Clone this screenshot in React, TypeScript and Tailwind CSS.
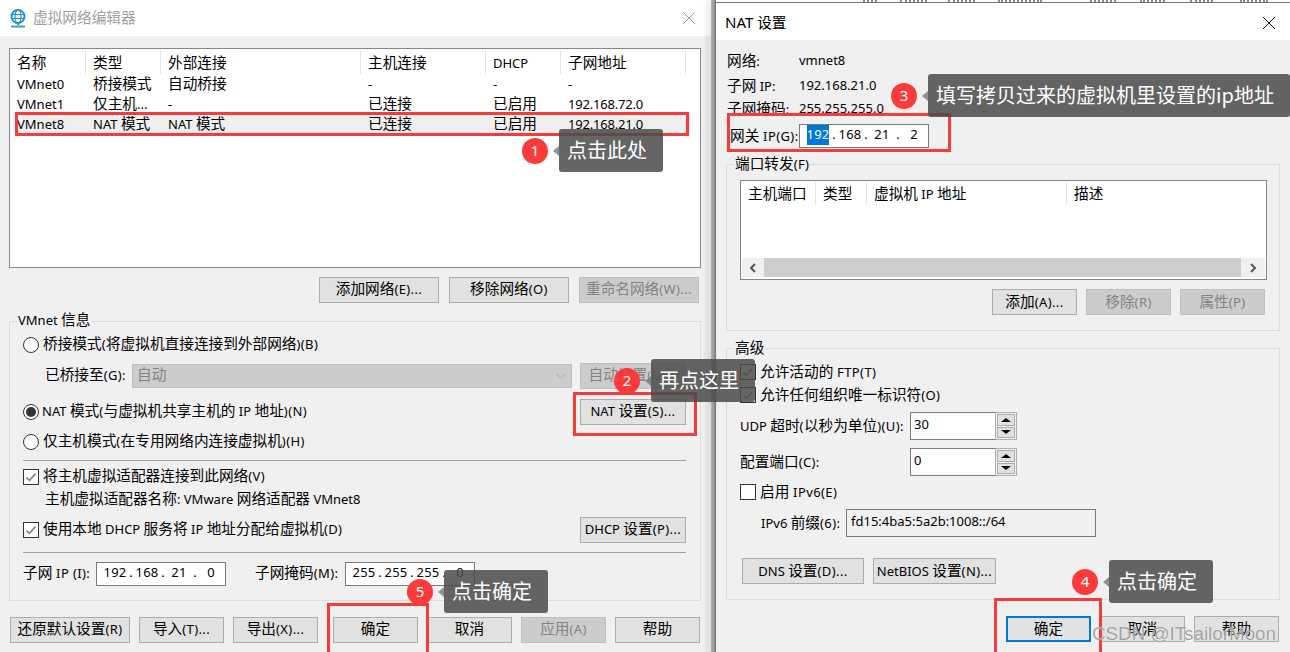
// App.tsx - VMware virtual network editor dialogs with step callouts
import React from "react";
import clsx from "clsx";

// CJK glyphs run larger than the Latin UI font in these dialogs
const Mixed = ({ text }: { text: string }) => (
  <span className="inline-block pb-[var(--lift,2px)] leading-[18px] whitespace-pre">
    {text.split(/([\u4e00-\u9fff]+)/).map((part, i) =>
      /[\u4e00-\u9fff]/.test(part) ? (
        <span key={i} className="text-[14.67px] [font-family:'Noto_Sans_CJK_SC',sans-serif]">
          {part}
        </span>
      ) : (
        <span key={i} className={clsx(/[()]/.test(part) && "tracking-[0.4px]")}>
          {part}
        </span>
      )
    )}
  </span>
);

interface BtnProps {
  label: string;
  w: string;
  disabled?: boolean;
  focused?: boolean;
}

const Btn = ({ label, w, disabled, focused }: BtnProps) => (
  <button
    className={clsx(
      "h-[26px] shrink-0 flex items-center justify-center whitespace-nowrap",
      w,
      disabled
        ? "bg-[#cccccc] border border-[#bfbfbf] text-[#838383]"
        : "bg-[#e1e1e1] text-black",
      !disabled && (focused ? "border-2 border-[#0078d7]" : "border border-[#adadad]")
    )}
  >
    <Mixed text={label} />
  </button>
);

const Radio = ({ checked }: { checked?: boolean }) => (
  <span className="w-[16px] h-[16px] shrink-0 rounded-full border border-[#333333] bg-white flex items-center justify-center">
    {checked && <span className="w-[10px] h-[10px] rounded-full bg-[#333333]" />}
  </span>
);

const Check = ({ checked }: { checked?: boolean }) => (
  <span className="w-[16px] h-[16px] shrink-0 border border-[#333333] bg-white flex items-center justify-center">
    {checked && (
      <svg width="12" height="12" viewBox="0 0 12 12" fill="none">
        <path d="M1.5 6.5 L4.5 9.5 L10.5 2.5" stroke="#777777" strokeWidth="1.5" />
      </svg>
    )}
  </span>
);

const Row = ({ children, className }: { children: React.ReactNode; className?: string }) => (
  <div className={clsx("flex items-center whitespace-nowrap", className)}>{children}</div>
);

const Separator = ({ className }: { className?: string }) => (
  <div className={clsx("h-px w-[663px] bg-[#a0a0a0]", className)} />
);

const IpField = ({ parts, selectFirst }: { parts: string[]; selectFirst?: boolean }) => (
  <div className="w-[130px] h-[24px] shrink-0 bg-white border border-[#7a7a7a] flex items-center pl-[6px] pb-[2px] tracking-[0.2px]">
    {parts.map((p, i) => (
      <React.Fragment key={i}>
        <span className="w-[24px] flex justify-center">
          <span className={clsx(selectFirst && i === 0 && "bg-[#0078d7] text-white")}>{p}</span>
        </span>
        {i < 3 && <span className="w-[8px] text-center">.</span>}
      </React.Fragment>
    ))}
  </div>
);

const Legend = ({ text }: { text: string }) => (
  <span className="absolute left-[7px] top-[-11px] h-[20px] px-[1px] bg-[#f0f0f0] flex items-center">
    <Mixed text={text} />
  </span>
);

const Spin = ({ value }: { value: string }) => (
  <div className="w-[107px] h-[28px] shrink-0 flex border border-[#7a7a7a] bg-white">
    <span className="flex-1 pl-[3px] pt-[1px] leading-[20px]">{value}</span>
    <div className="w-[22px] -my-px -mr-px flex flex-col border border-[#adadad] bg-[#f0f0f0] p-px gap-px">
      <span className="flex-1 bg-[#e1e1e1] border border-[#adadad] flex items-center justify-center">
        <span className="border-x-[5px] border-x-transparent border-b-[4px] border-b-black" />
      </span>
      <span className="flex-1 bg-[#e1e1e1] border border-[#adadad] flex items-center justify-center">
        <span className="border-x-[5px] border-x-transparent border-t-[4px] border-t-black" />
      </span>
    </div>
  </div>
);

const Chevron = ({ dir }: { dir: "left" | "right" | "down" }) => (
  <svg width="10" height="10" viewBox="0 0 10 10" fill="none">
    <path
      d={dir === "left" ? "M7 1 L3 5 L7 9" : dir === "right" ? "M3 1 L7 5 L3 9" : "M0.5 3 L5 7.5 L9.5 3"}
      stroke={dir === "down" ? "#a8a8a8" : "#555555"}
      strokeWidth={dir === "down" ? 1 : 2}
    />
  </svg>
);

const CloseIcon = ({ color }: { color: string }) => (
  <svg width="14" height="14" viewBox="0 0 14 14" fill="none">
    <path d="M1 1 L13 13 M13 1 L1 13" stroke={color} strokeWidth="1" />
  </svg>
);

const GlobeIcon = () => (
  <svg width="18" height="19" viewBox="0 0 18 19" fill="none">
    <circle cx="9" cy="7.5" r="6.5" stroke="#1f8fd6" strokeWidth="2" />
    <ellipse cx="9" cy="7.5" rx="3" ry="6.5" stroke="#1f8fd6" strokeWidth="1.2" />
    <path d="M2.5 5.5 H15.5 M2.5 9.5 H15.5" stroke="#1f8fd6" strokeWidth="1.2" />
    <path d="M9 14 V16" stroke="#2d9c8f" strokeWidth="2" />
    <path d="M2 17.5 H16" stroke="#3aa89a" strokeWidth="2" />
  </svg>
);

const NETWORKS = [
  ["VMnet0", "桥接模式", "自动桥接", "-", "-", "-"],
  ["VMnet1", "仅主机...", "-", "已连接", "已启用", "192.168.72.0"],
  ["VMnet8", "NAT 模式", "NAT 模式", "已连接", "已启用", "192.168.21.0"],
];

const NetworkList = () => (
  <div className="h-[220px] bg-white border border-[#828790]">
    <div className="h-[25px] grid grid-cols-[76px_75px_200px_125px_75px_125px] items-center">
      {["名称", "类型", "外部连接", "主机连接", "DHCP", "子网地址"].map((h) => (
        <div key={h} className="h-[24px] pl-[7px] pt-[6px] border-r border-[#e5e5e5] flex items-center">
          <Mixed text={h} />
        </div>
      ))}
    </div>
    <div className="ml-[5px] w-[675px]">
      {NETWORKS.map((row, r) => (
        <div
          key={row[0]}
          className={clsx(
            "h-[20px] grid grid-cols-[71px_75px_200px_125px_75px_129px] items-center",
            r === 2 && "bg-[#efefef]"
          )}
        >
          {row.map((cell, i) => (
            <div key={i} className={clsx(i === 0 ? "pl-[2px]" : "pl-[7px]", i === 5 && "tracking-[-0.2px]")}>
              <Mixed text={cell} />
            </div>
          ))}
        </div>
      ))}
    </div>
  </div>
);

const VirtualNetworkEditor = () => (
  <div className="w-[716px] h-full shrink-0 flex [--lift:4px]">
    <div className="w-[711px] flex flex-col bg-white">
      <div className="h-[36px] shrink-0 flex items-center pl-[9px] pr-[15px] text-[#a0a0a0]">
        <GlobeIcon />
        <span className="ml-[6px] text-[15px]">
          <Mixed text="虚拟网络编辑器" />
        </span>
        <span className="ml-auto">
          <CloseIcon color="#a0a0a0" />
        </span>
      </div>
      <div className="flex-1 bg-[#f0f0f0] pl-[9px] pr-[10px] pt-[12px]">
        <NetworkList />
        <div className="mt-[9px] flex justify-end gap-[10px] pr-[2px]">
          <Btn label="添加网络(E)..." w="w-[120px]" />
          <Btn label="移除网络(O)" w="w-[120px]" />
          <Btn label="重命名网络(W)..." w="w-[120px]" disabled />
        </div>
        <div className="relative mt-[18px] h-[280px] border border-[#dcdcdc] pl-[13px] pt-[13px]">
          <Legend text="VMnet 信息" />
          <Row className="h-[20px] gap-[4px]">
            <Radio />
            <Mixed text="桥接模式(将虚拟机直接连接到外部网络)(B)" />
          </Row>
          <Row className="h-[26px] mt-[8px] pl-[22px]">
            <span className="w-[87px]">
              <Mixed text="已桥接至(G):" />
            </span>
            <div className="w-[440px] h-[24px] bg-[#cccccc] border border-[#bfbfbf] text-[#838383] flex items-center justify-between pl-[4px] pr-[5px]">
              <Mixed text="自动" />
              <Chevron dir="down" />
            </div>
            <span className="ml-[8px]">
              <Btn label="自动设置(U)..." w="w-[106px]" disabled />
            </span>
          </Row>
          <Row className="h-[26px] mt-[10px] w-[663px] justify-between">
            <span className="flex items-center gap-[3px]">
              <Radio checked />
              <Mixed text="NAT 模式(与虚拟机共享主机的 IP 地址)(N)" />
            </span>
            <Btn label="NAT 设置(S)..." w="w-[106px]" />
          </Row>
          <Row className="h-[20px] mt-[7px] gap-[4px]">
            <Radio />
            <Mixed text="仅主机模式(在专用网络内连接虚拟机)(H)" />
          </Row>
          <Separator className="mt-[8px]" />
          <Row className="h-[20px] mt-[6px] gap-[4px]">
            <Check checked />
            <Mixed text="将主机虚拟适配器连接到此网络(V)" />
          </Row>
          <Row className="h-[20px] mt-[3px] pl-[22px]">
            <Mixed text="主机虚拟适配器名称: VMware 网络适配器 VMnet8" />
          </Row>
          <Row className="h-[26px] mt-[7px] w-[663px] justify-between">
            <span className="flex items-center gap-[4px]">
              <Check checked />
              <Mixed text="使用本地 DHCP 服务将 IP 地址分配给虚拟机(D)" />
            </span>
            <Btn label="DHCP 设置(P)..." w="w-[106px]" />
          </Row>
          <Separator className="mt-[9px]" />
          <Row className="h-[24px] mt-[9px]">
            <span className="w-[73px]">
              <Mixed text="子网 IP (I):" />
            </span>
            <IpField parts={["192", "168", "21", "0"]} />
            <span className="ml-[29px] w-[90px]">
              <Mixed text="子网掩码(M):" />
            </span>
            <IpField parts={["255", "255", "255", "0"]} />
          </Row>
        </div>
        <div className="mt-[16px] ml-px flex gap-[9px]">
          <Btn label="还原默认设置(R)" w="w-[120px]" />
          <Btn label="导入(T)..." w="w-[85px]" />
          <Btn label="导出(X)..." w="w-[85px]" />
          <span className="ml-[6px]">
            <Btn label="确定" w="w-[85px]" />
          </span>
          <Btn label="取消" w="w-[85px]" />
          <Btn label="应用(A)" w="w-[85px]" disabled />
          <Btn label="帮助" w="w-[85px]" />
        </div>
      </div>
    </div>
    {/* drop shadow where the second dialog overlaps this one */}
    <div className="relative w-[5px] border-r border-[#777777] bg-linear-to-r from-[#b4b4b4] to-[#8c8c8c] shadow-[-3px_0_6px_rgba(0,0,0,0.14)]" />
  </div>
);

// bottoms of the toolbar labels belonging to the window behind
const BEHIND_MARKS = [
  "w-[14px]",
  "w-[27px] ml-[23px]",
  "w-[27px] ml-[21px]",
  "w-[44px] ml-[23px]",
  "w-[26px] ml-[48px]",
  "w-[25px] ml-[24px]",
  "w-[23px] ml-[25px]",
  "w-[28px] ml-[27px]",
];

const NatSettings = () => (
  <div className="flex-1 h-full flex flex-col bg-white">
    <div className="h-[3px] shrink-0 border-b border-[#777777] flex pl-[147px]">
      {BEHIND_MARKS.map((m) => (
        <span key={m} className={clsx("h-[2px] border-b-2 border-dotted border-[#888888]", m)} />
      ))}
    </div>
    <div className="h-[37px] shrink-0 flex items-center pl-[9px] pr-[14px] pt-[2px] text-[15px]">
      <Mixed text="NAT 设置" />
      <span className="ml-auto">
        <CloseIcon color="#111111" />
      </span>
    </div>
    <div className="flex-1 bg-[#f0f0f0] pl-[10px] pt-[10px]">
      <Row className="h-[20px] pl-px pt-[2px]">
        <span className="w-[72px]">
          <Mixed text="网络:" />
        </span>
        <Mixed text="vmnet8" />
      </Row>
      <Row className="h-[20px] mt-[5px] pl-px pt-[2px]">
        <span className="w-[72px]">
          <Mixed text="子网 IP:" />
        </span>
        <Mixed text="192.168.21.0" />
      </Row>
      <Row className="h-[20px] mt-[3px] pl-px pt-[2px]">
        <span className="w-[72px]">
          <Mixed text="子网掩码:" />
        </span>
        <Mixed text="255.255.255.0" />
      </Row>
      <Row className="h-[24px] mt-[6px] pl-[4px]">
        <span className="w-[69px]">
          <Mixed text="网关 IP(G):" />
        </span>
        <IpField parts={["192", "168", "21", "2"]} selectFirst />
      </Row>

      <div className="relative mt-[16px] w-[554px] h-[167px] border border-[#dcdcdc] pl-[13px] pt-[15px]">
        <Legend text="端口转发(F)" />
        <div className="w-[527px] h-[100px] bg-white border border-[#828790] flex flex-col">
          <div className="h-[24px] grid grid-cols-[75px_51px_200px_200px] items-center">
            {["主机端口", "类型", "虚拟机 IP 地址", "描述"].map((h, i) => (
              <div
                key={h}
                className={clsx("h-[23px] pl-[7px] pt-[2px] flex items-center", i < 3 && "border-r border-[#e5e5e5]")}
              >
                <Mixed text={h} />
              </div>
            ))}
          </div>
          <div className="mt-auto mb-[2px] mx-px h-[19px] flex">
            <span className="w-[22px] bg-[#f0f0f0] flex items-center justify-center">
              <Chevron dir="left" />
            </span>
            <span className="flex-1 bg-[#cdcdcd]" />
            <span className="w-[24px] bg-[#f0f0f0] flex items-center justify-center">
              <Chevron dir="right" />
            </span>
          </div>
        </div>
        <div className="mt-[9px] w-[525px] flex justify-end gap-[9px]">
          <Btn label="添加(A)..." w="w-[85px]" />
          <Btn label="移除(R)" w="w-[85px]" disabled />
          <Btn label="属性(P)" w="w-[85px]" disabled />
        </div>
      </div>

      <div className="relative mt-[17px] w-[554px] h-[252px] border border-[#dcdcdc] pl-[13px] pt-[13px]">
        <Legend text="高级" />
        <Row className="h-[20px] gap-[4px]">
          <Check checked />
          <Mixed text="允许活动的 FTP(T)" />
        </Row>
        <Row className="h-[20px] mt-[3px] gap-[4px]">
          <Check checked />
          <Mixed text="允许任何组织唯一标识符(O)" />
        </Row>
        <Row className="h-[28px] mt-[7px]">
          <span className="w-[170px]">
            <Mixed text="UDP 超时(以秒为单位)(U):" />
          </span>
          <Spin value="30" />
        </Row>
        <Row className="h-[28px] mt-[8px]">
          <span className="w-[170px]">
            <Mixed text="配置端口(C):" />
          </span>
          <Spin value="0" />
        </Row>
        <Row className="h-[20px] mt-[6px] gap-[4px]">
          <Check />
          <Mixed text="启用 IPv6(E)" />
        </Row>
        <Row className="h-[28px] mt-[7px] pl-[21px]">
          <span className="w-[85px]">
            <Mixed text="IPv6 前缀(6):" />
          </span>
          <div className="w-[250px] h-[28px] border border-[#7a7a7a] pl-[4px] pt-px leading-[20px]">
            fd15:4ba5:5a2b:1008::/64
          </div>
        </Row>
        <div className="mt-[21px] ml-[2px] flex gap-[9px]">
          <Btn label="DNS 设置(D)..." w="w-[122px]" />
          <Btn label="NetBIOS 设置(N)..." w="w-[123px]" />
        </div>
      </div>

      <div className="mt-[16px] w-[553px] flex justify-end gap-[9px]">
        <Btn label="确定" w="w-[85px]" focused />
        <Btn label="取消" w="w-[85px]" />
        <Btn label="帮助" w="w-[85px]" />
      </div>
    </div>
  </div>
);

interface CalloutProps {
  step: number;
  text: string;
  pos: string;
  w: string;
}

// numbered red dot plus a dark speech bubble, laid over the dialogs
const Callout = ({ step, text, pos, w }: CalloutProps) => (
  <div className={clsx("absolute h-[43px] flex items-center", pos)}>
    <span className="w-[26px] h-[26px] rounded-full bg-[#fb3b3b] text-white text-[15px] flex items-center justify-center">
      {step}
    </span>
    <span className="ml-[5px] border-y-[5px] border-y-transparent border-r-[6px] border-r-[#777777]/80" />
    <span
      className={clsx(
        "h-[43px] rounded-[3px] bg-[#4a4a4a]/85 text-white text-[20px] pl-[8px] pb-[2px] flex items-center whitespace-nowrap [font-family:'Noto_Sans_CJK_SC',sans-serif]",
        w
      )}
    >
      {text}
    </span>
  </div>
);

const RedBox = ({ pos }: { pos: string }) => (
  <div className={clsx("absolute border-[3px] border-[#f73b3b] pointer-events-none", pos)} />
);

export default function App() {
  return (
    <div className="relative w-[1290px] h-[652px] overflow-hidden flex text-[13px] text-black bg-white [font-family:'Noto_Sans','Noto_Sans_CJK_SC',sans-serif]">
      <VirtualNetworkEditor />
      <NatSettings />

      <RedBox pos="left-[15px] top-[112px] w-[674px] h-[24px]" />
      <RedBox pos="left-[573px] top-[392px] w-[124px] h-[44px]" />
      <RedBox pos="left-[727px] top-[113px] w-[224px] h-[39px]" />
      <RedBox pos="left-[994px] top-[598px] w-[108px] h-[60px]" />
      <RedBox pos="left-[327px] top-[603px] w-[102px] h-[55px]" />

      <Callout step={1} text="点击此处" pos="left-[522px] top-[129px]" w="w-[104px]" />
      <Callout step={2} text="再点这里" pos="left-[614px] top-[359px]" w="w-[104px]" />
      <Callout step={3} text="填写拷贝过来的虚拟机里设置的ip地址" pos="left-[891px] top-[74px]" w="w-[362px]" />
      <Callout step={4} text="点击确定" pos="left-[1072px] top-[560px]" w="w-[104px]" />
      <Callout step={5} text="点击确定" pos="left-[407px] top-[570px]" w="w-[104px]" />

      <span className="absolute left-[1092px] top-[622px] text-[18.8px] leading-[24px] text-[#8a8a8a]/80 [font-family:'Liberation_Sans',sans-serif] [text-shadow:0_0_1px_#ffffff]">
        CSDN @ITsailorMoon
      </span>
    </div>
  );
}
